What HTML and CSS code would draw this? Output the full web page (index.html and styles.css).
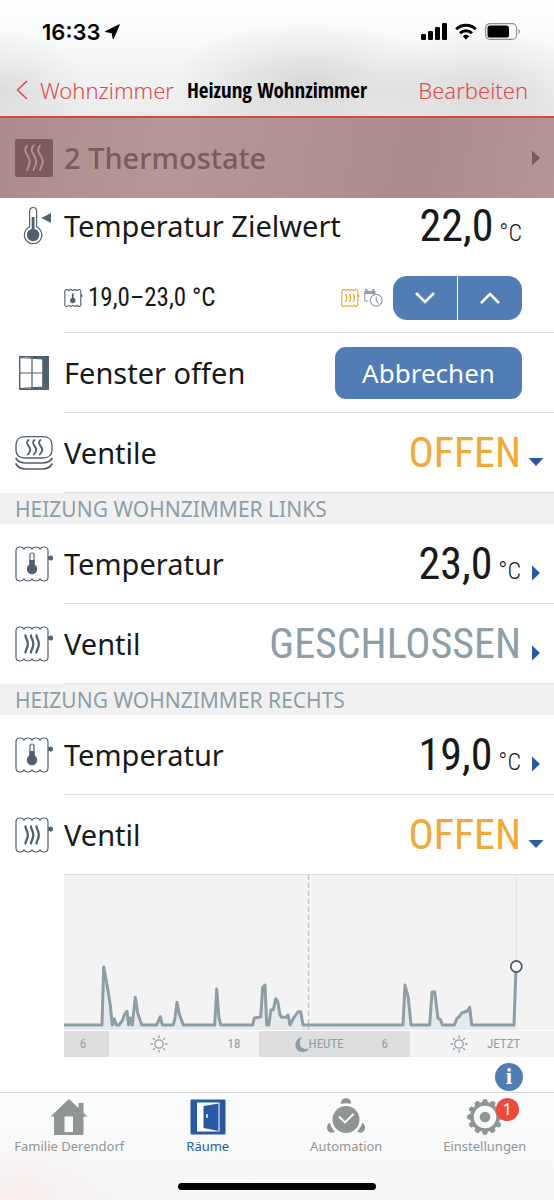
FILE: index.html
```html
<!DOCTYPE html>
<html lang="de">
<head>
<meta charset="utf-8">
<meta name="viewport" content="width=device-width, initial-scale=1">
<title>Heizung Wohnzimmer</title>
<link rel="stylesheet" href="styles.css">
</head>
<body>
<svg class="defs" aria-hidden="true">
  <symbol id="radiator" viewBox="0 0 38 36">
    <path d="M1 31V5Q1 1 5 1Q8 1 9 3Q10 1 13 1Q16 1 17 3Q18 1 21 1Q24 1 25 3Q26 1 29 1Q33 1 33 5V31Q33 35 29 35Q26 35 25 33Q24 35 21 35Q18 35 17 33Q16 35 13 35Q10 35 9 33Q8 35 5 35Q1 35 1 31Z" fill="none" stroke="currentColor" stroke-width="1.200"/>
    <path d="M33 10.500h1.500c.5-1.500 3.500-1 3.500 1.500s-3 3-3.500 1.500H33z" fill="currentColor" stroke="currentColor" stroke-width=".5"/>
  </symbol>
  <symbol id="radiator-temp" viewBox="0 0 38 36">
    <use href="#radiator" width="38" height="36"/>
    <path d="M15 19V9a2 2 0 0 1 4 0v10" fill="none" stroke="currentColor" stroke-width="1.200"/>
    <path d="M14.500 14h5v5h-5z" fill="currentColor"/><circle cx="17" cy="23" r="5.200" fill="currentColor"/>
  </symbol>
  <symbol id="radiator-valve" viewBox="0 0 38 36">
    <use href="#radiator" width="38" height="36"/>
    <g fill="none" stroke="currentColor" stroke-width="2.300" stroke-linecap="round"><path d="M10.500 9.500c0 3 2.300 4 2.300 8.500s-2.300 5.500-2.300 8.500"/><path d="M16 9.500c0 3 2.300 4 2.300 8.500s-2.300 5.500-2.300 8.500"/><path d="M21.500 9.500c0 3 2.300 4 2.300 8.500s-2.300 5.500-2.300 8.500"/></g>
  </symbol>
  <symbol id="mini-radiator" viewBox="0 0 19 18">
    <path d="M.8 15.500v-13Q.8.600 2.800.6T4.800 1.600Q6.800-.3 8.800 1.600Q10.800-.3 12.800 1.600Q14.500.2 16 .8 16.800 1 16.800 2.500v13Q16.800 17.400 14.800 17.400T12.800 16.400Q10.800 18.300 8.800 16.400Q6.800 18.300 4.800 16.400Q3 17.800 1.500 17.200.8 17 .8 15.500Z" fill="none" stroke="currentColor" stroke-width="1.100"/>
    <path d="M17 5.500h1.300v2.500H17z" fill="currentColor"/>
  </symbol>
  <symbol id="arrow-right" viewBox="0 0 16 16"><path d="M4 0.500L12 8L4 15.500z" fill="currentColor"/></symbol>
  <symbol id="arrow-down" viewBox="0 0 16 16"><path d="M.5 4h15L8 12z" fill="currentColor"/></symbol>
  <symbol id="sun" viewBox="0 0 18 18"><g fill="none" stroke="currentColor" stroke-width="1.300"><circle cx="9" cy="9" r="4.200"/><path d="M9 .5v2.500M9 15v2.500M.5 9h2.500M15 9h2.500M3 3l1.700 1.700M13.300 13.300L15 15M15 3l-1.700 1.700M4.700 13.300L3 15"/></g></symbol>
</svg>

<header class="header">
  <div class="status">
    <div class="time">16:33
      <svg width="15" height="16" viewBox="0 0 15 16"><path d="M14.300.7L8.300 15 7 8.700 .5 7.600z" stroke="#000" stroke-width="1" stroke-linejoin="round"/></svg>
    </div>
    <div class="signals">
      <svg width="26" height="17" viewBox="0 0 26 17"><rect y="11" width="5" height="6" rx="1.300"/><rect x="7" y="8" width="5" height="9" rx="1.300"/><rect x="14" y="4" width="5" height="13" rx="1.300"/><rect x="21" width="5" height="17" rx="1.300"/></svg>
      <svg width="22" height="17" viewBox="0 0 22 17"><g fill="none" stroke="#000" stroke-width="3"><path d="M1.200 6.300a14 14 0 0 1 19.600 0"/><path d="M5 10.300a8.600 8.600 0 0 1 12 0"/></g><path d="M7.800 13.200a4.700 4.700 0 0 1 6.400 0L11 16.600z"/></svg>
      <svg width="36" height="17" viewBox="0 0 36 17"><rect x=".6" y=".6" width="31" height="15.800" rx="4.500" fill="none" stroke="#8c8c8c" stroke-width="1.100"/><rect x="2.500" y="2.500" width="21.500" height="12" rx="2.600"/><path d="M33.500 6v5c1.700-.5 1.700-4.500 0-5z" fill="#8c8c8c"/></svg>
    </div>
  </div>
  <nav class="nav">
    <a class="back" href="#"><svg width="12" height="20" viewBox="0 0 12 20"><path d="M11 1L1.500 10l9.500 9" fill="none" stroke="currentColor" stroke-width="1.600"/></svg>Wohnzimmer</a>
    <h1 class="title">Heizung Wohnzimmer</h1>
    <button class="edit" type="button">Bearbeiten</button>
  </nav>
</header>

<main>
  <a class="banner" href="#">
    <svg class="banner-icon" width="38" height="38" viewBox="0 0 38 38"><rect width="38" height="38" rx="2.500" fill="#7d5a5b"/><g fill="none" stroke="#b49394" stroke-width="1.900" stroke-linecap="round"><path id="w" d="M12 6.500c-6 7 4.500 10 2.500 18-.5 2-1.500 3.500-2.500 6.500"/><use href="#w" x="6.500"/><use href="#w" x="13"/></g></svg>
    <span class="banner-text">2 Thermostate</span>
    <svg class="arrow" width="16" height="16"><use href="#arrow-right"/></svg>
  </a>

  <ul class="list">
    <li class="row target">
      <span class="icon"><svg width="38" height="39" viewBox="0 0 38 39"><g fill="none" stroke="#50606e" stroke-width="1.200"><path d="M14.600 21V5a3.500 3.500 0 0 1 7 0v16a8.700 8.700 0 1 1-7 0z"/></g><circle cx="18.100" cy="29" r="6.200" fill="#50606e"/><path d="M16.700 11h2.800v14h-2.800z" fill="#50606e"/><path d="M26.500 12l9.500-5v10z" fill="#50606e"/></svg></span>
      <div class="body">
        <div class="line">
          <span class="label">Temperatur Zielwert</span>
          <span class="value">22,0<small>°C</small></span>
        </div>
        <div class="line controls">
          <span class="range"><svg class="slate" width="19" height="18" viewBox="0 0 19 18"><use href="#mini-radiator" width="19" height="18"/><path d="M7.900 4.500h1.800V10H7.900z" fill="currentColor"/><circle cx="8.800" cy="11.500" r="2.700" fill="currentColor"/></svg>19,0–23,0 °C</span>
          <span class="state">
            <svg class="orange" width="19" height="18" viewBox="0 0 19 18"><use href="#mini-radiator" width="19" height="18"/><path d="M4.500 5q2.500 4 0 8M8.300 5q2.500 4 0 8M12.100 5q2.500 4 0 8" fill="none" stroke="currentColor" stroke-width="1.400"/></svg>
            <svg width="19" height="18" viewBox="0 0 19 18"><g fill="none" stroke="#8d9ea7" stroke-width="1.100"><path d="M4.500 12H.8V4"/><circle cx="12.200" cy="11.300" r="5.900"/><path d="M12.200 7.500v4l2.500 3"/></g><path d="M.3 2h1V0h2.200v2h4.800V0h2.200v2h1v3H.3z" fill="#8d9ea7"/></svg>
          </span>
          <span class="stepper">
            <button type="button" aria-label="Senken"><svg width="20" height="12" viewBox="0 0 20 12"><path d="M1 1l9 9 9-9"/></svg></button>
            <button type="button" aria-label="Erhöhen"><svg width="20" height="12" viewBox="0 0 20 12"><path d="M1 11l9-9 9 9"/></svg></button>
          </span>
        </div>
      </div>
    </li>
    <li class="row">
      <span class="icon"><svg width="38" height="34" viewBox="0 0 38 34"><path d="M4.500.5h29v33H4.500z" fill="none" stroke="#50606e"/><path d="M27.500 3L34 .5v33L27.500 31zM5 .5h29L28 3zM5 33.500h29L28 31z" fill="#50606e"/><path d="M4.800 1.500L28 3v28L4.800 32.500zM17 2v30M5 17h23" fill="none" stroke="#50606e" stroke-width="1.200"/></svg></span>
      <div class="body"><span class="label">Fenster offen</span><button class="cancel" type="button">Abbrechen</button></div>
    </li>
    <li class="row">
      <span class="icon"><svg width="38" height="34" viewBox="0 0 38 34"><g fill="none" stroke="#50606e" stroke-width="1.300"><path d="M1 9C1 3 4 .7 11 .7h16c7 0 10 2.300 10 8.300v5c0 6-4 8-10 8H11C5 22 1 20 1 14z"/><path d="M.7 22c2 4 5 5 10 5h16.600c5 0 8-1 10-5M.7 27.500c2 4 5 5.500 10 5.500h16.600c5 0 8-1.500 10-5.500" stroke-width="1.700"/><g stroke-width="1.900" stroke-linecap="round"><path id="v" d="M13.500 4c-5 4 3.500 6.500 1.500 11-.4 1.300-1.200 2.300-2.200 3.500"/><use href="#v" x="6"/><use href="#v" x="12"/></g></g></svg></span>
      <div class="body"><span class="label">Ventile</span><span class="value open">OFFEN</span><svg class="arrow" width="16" height="16"><use href="#arrow-down"/></svg></div>
    </li>
  </ul>

  <h2 class="section">HEIZUNG WOHNZIMMER LINKS</h2>
  <ul class="list">
    <li class="row">
      <span class="icon"><svg class="slate" width="38" height="36"><use href="#radiator-temp"/></svg></span>
      <div class="body"><span class="label">Temperatur</span><span class="value">23,0<small>°C</small></span><svg class="arrow" width="16" height="16"><use href="#arrow-right"/></svg></div>
    </li>
    <li class="row">
      <span class="icon"><svg class="slate" width="38" height="36"><use href="#radiator-valve"/></svg></span>
      <div class="body"><span class="label">Ventil</span><span class="value closed">GESCHLOSSEN</span><svg class="arrow" width="16" height="16"><use href="#arrow-right"/></svg></div>
    </li>
  </ul>

  <h2 class="section">HEIZUNG WOHNZIMMER RECHTS</h2>
  <ul class="list">
    <li class="row">
      <span class="icon"><svg class="slate" width="38" height="36"><use href="#radiator-temp"/></svg></span>
      <div class="body"><span class="label">Temperatur</span><span class="value">19,0<small>°C</small></span><svg class="arrow" width="16" height="16"><use href="#arrow-right"/></svg></div>
    </li>
    <li class="row">
      <span class="icon"><svg class="slate" width="38" height="36"><use href="#radiator-valve"/></svg></span>
      <div class="body"><span class="label">Ventil</span><span class="value open">OFFEN</span><svg class="arrow" width="16" height="16"><use href="#arrow-down"/></svg></div>
    </li>
  </ul>

  <section class="history" aria-label="Verlauf">
    <svg class="chart" viewBox="0 0 490 155">
      <path d="M0 155V150H38L39.700 92L42.700 108L46 128L48.300 150L50.300 144L52.300 150H55L58.300 145.700L60.700 139L63 136.300L64.700 150L66.300 143L68.300 150L71.300 122.300L73.700 138L77.700 150H92.700L96.300 141.700L98.300 150H109.300L111 143L113 127.300L115 138L119.300 150H150.700L152.700 114L155 143L156.700 150H188.700L190.300 143L196.700 142L198.700 112.300L201 110L202.700 150H204.700L207 135L209.300 134.700L211.700 123.700L213.700 126.300L216 140L217.700 142.300H222.300L224 140L226 150L229.300 143.300L234.300 136.700H236.700L239 150H339L341 110L344.300 123L347 150H365.700L368 117H370.700L374 143.300L376.300 144.300L378.300 150H390.300L393 143.300L394.700 142.300L397.700 138L403.300 136L405.700 132.300L407.700 150H450L452 92V155Z" fill="#e7eaed"/>
      <path d="M244.500 0V155" stroke="#bcc4c9" stroke-dasharray="5 3" stroke-width="1.400"/>
      <path d="M452.500 0V92" stroke="#e6e6e6"/>
      <path d="M0 150H38L39.700 92L42.700 108L46 128L48.300 150L50.300 144L52.300 150H55L58.300 145.700L60.700 139L63 136.300L64.700 150L66.300 143L68.300 150L71.300 122.300L73.700 138L77.700 150H92.700L96.300 141.700L98.300 150H109.300L111 143L113 127.300L115 138L119.300 150H150.700L152.700 114L155 143L156.700 150H188.700L190.300 143L196.700 142L198.700 112.300L201 110L202.700 150H204.700L207 135L209.300 134.700L211.700 123.700L213.700 126.300L216 140L217.700 142.300H222.300L224 140L226 150L229.300 143.300L234.300 136.700H236.700L239 150H339L341 110L344.300 123L347 150H365.700L368 117H370.700L374 143.300L376.300 144.300L378.300 150H390.300L393 143.300L394.700 142.300L397.700 138L403.300 136L405.700 132.300L407.700 150H450L452 92" fill="none" stroke="#8d9ea7" stroke-width="3" stroke-linejoin="round"/>
      <circle cx="452.300" cy="91.500" r="5.500" fill="#fff" stroke="#50606e" stroke-width="1.800"/>
    </svg>
    <div class="axis">
      <div class="night early"><span>6</span></div>
      <div class="day"><span><svg width="18" height="18"><use href="#sun"/></svg></span><span>18</span></div>
      <div class="night"><span class="today"><svg width="14" height="15" viewBox="0 0 14 15"><path d="M7 0C-2 2-2 15 8 15c3 0 5-1.500 6-3.500C6 14 2 6 7 0z" fill="currentColor"/></svg>HEUTE</span><span>6</span></div>
      <div class="day now"><span><svg width="18" height="18"><use href="#sun"/></svg></span><span>JETZT</span></div>
    </div>
  </section>
  <div class="info-line"><button class="info" type="button">i</button></div>
</main>

<footer class="footer">
  <nav class="tabs">
    <a class="tab" href="#"><svg width="38" height="38" viewBox="0 0 38 38"><path d="M19 1l9.500 9V5h5v10l4 3.500h-4V36q0 1-1 1H5q-1 0-1-1V18.500H.5zM14.500 18.500v15.500h8.500V18.500z" fill="currentColor" fill-rule="evenodd"/></svg>Familie Derendorf</a>
    <a class="tab active" href="#" aria-current="page"><svg width="38" height="38" viewBox="0 0 38 38"><rect x="1.500" y="1.500" width="35" height="35" rx="1" fill="currentColor"/><path d="M8 4.500h22.500v29H8z" fill="#fff"/><path d="M14.500 8L29.500 5.500v27.500L14.500 30z" fill="currentColor"/><rect x="17.200" y="16" width="1.600" height="4" rx=".8" fill="#fff"/></svg>Räume</a>
    <a class="tab" href="#"><svg width="38" height="38" viewBox="0 0 38 38"><g fill="currentColor"><circle cx="19" cy="21.500" r="13.500"/><path id="bell" d="M13.800 5.800C14-1.500 24-1.500 24.200 5.800 21 4.900 17 4.900 13.800 5.800z"/><use href="#bell" transform="rotate(120 19 21.500)"/><use href="#bell" transform="rotate(240 19 21.500)"/></g><path d="M12 18.500l6 6 8.500-8.500" fill="none" stroke="#fff" stroke-width="1.800"/></svg>Automation</a>
    <a class="tab" href="#"><span class="gear"><svg width="38" height="38" viewBox="0 0 38 38"><g fill="currentColor"><g id="g"><path id="t" d="M15.800 8l.8-6q2.400-2 4.800 0l.8 6z"/><use href="#t" transform="rotate(30 19 19)"/><use href="#t" transform="rotate(60 19 19)"/></g><use href="#g" transform="rotate(90 19 19)"/><use href="#g" transform="rotate(180 19 19)"/><use href="#g" transform="rotate(270 19 19)"/><circle cx="19" cy="19" r="15"/></g><circle cx="19" cy="19" r="8.300" fill="none" stroke="#fafbfb" stroke-width="6"/></svg><span class="badge">1</span></span>Einstellungen</a>
  </nav>
  <div class="home-indicator"></div>
</footer>
</body>
</html>
```
FILE: styles.css
```css
* { box-sizing: border-box; }
body {
  margin: 0;
  min-height: 100vh;
  display: flex;
  flex-direction: column;
  background: #fff;
  color: #17191b;
  font-family: "Noto Sans", sans-serif;
}
main { flex: 1; }
svg { display: block; flex: none; }
button { border: 0; padding: 0; margin: 0; background: none; font: inherit; color: inherit; }
a { color: inherit; text-decoration: none; }
.defs { position: absolute; width: 0; height: 0; }

.header {
  height: 118px;
  border-bottom: 2px solid #d8464b;
  background:
    radial-gradient(ellipse 140px 60px at 310px 82px, rgba(175, 175, 175, .4), transparent),
    radial-gradient(ellipse 110px 60px at 480px 90px, rgba(185, 185, 185, .4), transparent),
    radial-gradient(ellipse 90px 60px at 0 90px, rgba(190, 190, 190, .4), transparent),
    linear-gradient(#fdfefe, #f6f7f7 50%, #ececec);
}
.status {
  height: 63px;
  padding: 0 33px 0 42px;
  display: flex;
  align-items: center;
  justify-content: space-between;
  color: #000;
}
.time {
  display: flex;
  align-items: center;
  gap: 5px;
  font: 600 22px/24px Inter, sans-serif;
}
.signals { display: flex; gap: 8px; }
.nav {
  height: 53px;
  padding: 0 16px;
  display: grid;
  grid-template-columns: 1fr auto 1fr;
  align-items: center;
  font-size: 22px;
  font-weight: 300;
  line-height: 28px;
  color: #dd4a4e;
}
.back { display: flex; align-items: center; gap: 12px; }
.title {
  margin: 0;
  color: #000;
  font: 700 21px/28px "Open Sans Condensed", sans-serif;
}
.edit { justify-self: end; padding-right: 10px; }

.banner {
  height: 80px;
  padding: 0 10px 0 15px;
  display: flex;
  align-items: center;
  gap: 11px;
  color: #7d5a5b;
  font-size: 29px;
  font-weight: 500;
  line-height: 40px;
  background: linear-gradient(100deg, #ac8b8c, #b69798 30%, #b29293 50%, #ab8b8c 75%, #b59596);
}
.banner-text { flex: 1; }

.list { margin: 0; padding: 0; list-style: none; }
.row { height: 80px; display: flex; align-items: center; }
.icon { width: 64px; padding-left: 15px; flex: none; }
.slate { color: #50606e; }
.orange { color: #f0a52e; }
.body {
  flex: 1;
  align-self: stretch;
  padding-right: 10px;
  display: flex;
  align-items: center;
  border-bottom: 1px solid #dedfe0;
}
.label { flex: 1; font-size: 29px; line-height: 40px; }
.value { font: 400 44px/56px "Roboto Condensed", sans-serif; }
.value small { margin-left: 6px; font-size: 24px; font-weight: 300; line-height: 24px; }
.open, .closed { font-size: 42px; }
.open { color: #f0aa38; }
.closed { color: #8d9ea7; }
.body .arrow { margin: 18px 0 0 7px; color: #285aa4; }

.target { height: 135px; align-items: flex-start; }
.target .icon { padding-top: 8px; }
.target .body { flex-direction: column; align-items: stretch; padding-right: 32px; }
.line { display: flex; align-items: center; height: 56px; }
.controls { height: auto; flex: 1; padding-top: 10px; }
.range {
  flex: 1;
  display: flex;
  align-items: center;
  gap: 5px;
  font: 400 25px/32px "Roboto Condensed", sans-serif;
}
.state { display: flex; gap: 4px; margin-right: 10px; }
.stepper {
  width: 129px;
  height: 44px;
  display: grid;
  grid-template-columns: 1fr 1fr;
  gap: 1px;
  border-radius: 14px;
  overflow: hidden;
}
.stepper button { display: grid; place-items: center; background: #517cb4; }
.stepper path { fill: none; stroke: #fff; stroke-width: 2.5; }
.cancel {
  width: 187px;
  height: 52px;
  margin-right: 22px;
  border-radius: 11px;
  background: #517cb4;
  color: #fff;
  font-size: 26px;
}
.section {
  margin: 0;
  height: 31px;
  padding-left: 15px;
  background: #f1f1f1;
  color: #8d9ea7;
  font-size: 21px;
  font-weight: 400;
  line-height: 32px;
}

.history { margin-left: 64px; }
.chart { width: 100%; background: #f3f3f3; }
.axis {
  height: 27px;
  padding-top: 1px;
  display: grid;
  grid-template-columns: 45fr 150fr 151fr 144fr;
  color: #8d9ea7;
  font: 400 13px/26px "Roboto Condensed", sans-serif;
}
.axis div { display: grid; grid-template-columns: 2fr 1fr; align-items: center; justify-items: center; }
.axis .early { grid-template-columns: 1fr; padding-right: 7px; }
.axis .now { grid-template-columns: 77fr 67fr; justify-items: start; }
.axis .now span:first-child { justify-self: end; padding-right: 19px; }
.night { background: #dedede; }
.day { background: #f3f3f3; }
.axis .today { display: flex; align-items: center; justify-self: end; padding-right: 16px; }
.info-line { display: flex; justify-content: flex-end; padding: 6px 31px 1px 0; }
.info {
  width: 28px;
  height: 28px;
  border-radius: 50%;
  background: #517cb4;
  color: #fff;
  font: 700 23px/28px "Liberation Serif", serif;
}

.footer {
  height: 108px;
  display: flex;
  flex-direction: column;
  justify-content: space-between;
  align-items: center;
  padding: 5px 0 10px;
  border-top: 1px solid #d8dadb;
  background: radial-gradient(ellipse 100px 50px at 20px 100px, #faefef, transparent), linear-gradient(#fbfcfd, #f6f6f6);
}
.tabs { width: 100%; display: grid; grid-template-columns: repeat(4, 1fr); }
.tab {
  display: flex;
  flex-direction: column;
  align-items: center;
  color: #909594;
  font-size: 13px;
  font-weight: 400;
  line-height: 20px;
}
.active { color: #285aa4; }
.gear { position: relative; }
.badge {
  position: absolute;
  left: 30px;
  top: 0;
  width: 23px;
  height: 23px;
  border-radius: 50%;
  background: #ea4b3d;
  color: #fff;
  font-size: 16px;
  line-height: 23px;
  text-align: center;
}
.home-indicator { width: 198px; height: 7px; border-radius: 4px; background: #000; }
```
